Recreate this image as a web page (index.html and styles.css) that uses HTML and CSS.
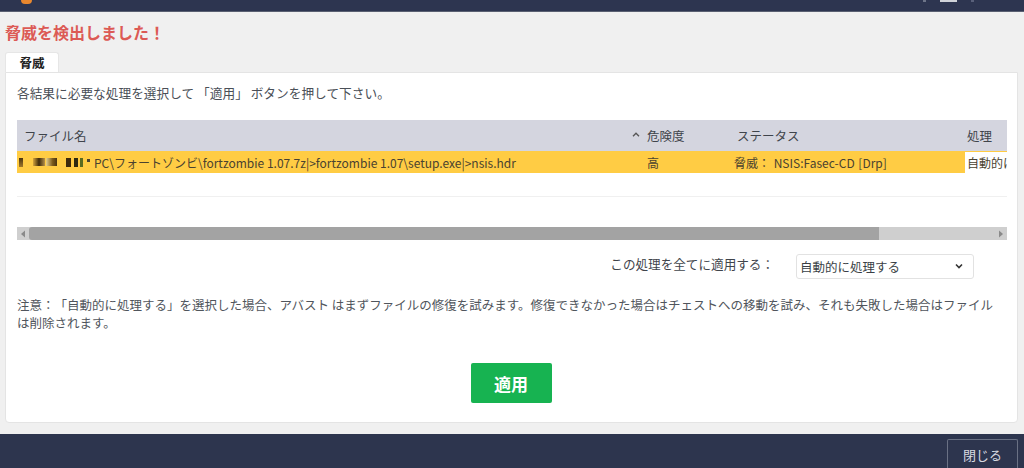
FILE: index.html
```html
<!DOCTYPE html>
<html lang="ja">
<head>
<meta charset="utf-8">
<title>脅威を検出しました</title>
<link rel="stylesheet" href="styles.css">
</head>
<body>
<header class="topbar">
  <span class="logo"></span>
  <span class="winctl">
    <span class="tick"></span>
    <span class="minbar"></span>
    <span class="tick tick-b"></span>
  </span>
</header>
<main class="content">
  <h1 class="title">脅威を検出しました！</h1>
  <div class="tabs"><div class="tab">脅威</div></div>
  <section class="panel">
    <p class="lead">各結果に必要な処理を選択して 「適用」 ボタンを押して下さい。</p>
    <div class="table">
      <div class="row head">
        <div class="c-file">ファイル名</div>
        <div class="c-risk"><svg class="sort" viewBox="0 0 8 5" width="8" height="5"><path d="M1 4.2 4 1.2 7 4.2" fill="none" stroke="#555" stroke-width="1.3"/></svg>危険度</div>
        <div class="c-status">ステータス</div>
        <div class="c-act">処理</div>
      </div>
      <div class="row item">
        <div class="c-file file-cell"><span class="mosaic"><i class="m m1"></i><i class="m m2"></i><i class="m m3"></i><i class="m m4"></i><i class="m m5"></i><i class="m m6"></i><i class="m m7"></i></span>PC\フォートゾンビ\fortzombie 1.07.7z|&gt;fortzombie 1.07\setup.exe|&gt;nsis.hdr</div>
        <div class="c-risk risk-val">高</div>
        <div class="c-status status-val">脅威： NSIS:Fasec-CD [Drp]</div>
        <div class="c-act act-val">自動的に処理する</div>
      </div>
      <div class="empty-row"></div>
    </div>
    <div class="hscroll">
      <svg class="arrow" viewBox="0 0 6 8" width="6" height="8"><path d="M5 0.5V7.5L1 4Z" fill="#8a8a8a"/></svg>
      <div class="track"><div class="thumb"></div></div>
      <svg class="arrow" viewBox="0 0 6 8" width="6" height="8"><path d="M1 0.5V7.5L5 4Z" fill="#8a8a8a"/></svg>
    </div>
    <div class="apply-all">
      <span class="apply-label">この処理を全てに適用する：</span>
      <div class="select">自動的に処理する
        <svg viewBox="0 0 8 6" width="8" height="6"><path d="M1 1.5 4 4.5 7 1.5" fill="none" stroke="#333" stroke-width="1.6"/></svg>
      </div>
    </div>
    <p class="note">注意：「自動的に処理する」を選択した場合、アバスト はまずファイルの修復を試みます。修復できなかった場合はチェストへの移動を試み、それも失敗した場合はファイルは削除されます。</p>
    <div class="actions"><button class="apply" type="button">適用</button></div>
  </section>
</main>
<footer class="footer"><button class="close" type="button">閉じる</button></footer>
</body>
</html>
```
FILE: styles.css
```css
* { box-sizing: border-box; }
html, body { margin: 0; height: 100%; }
body {
  width: 1024px; height: 468px; overflow: hidden;
  display: flex; flex-direction: column;
  background: #f0f0f0; color: #4a4f57;
  font-family: "Noto Sans CJK JP", "Noto Sans", sans-serif;
  font-size: 12px;
  text-spacing-trim: space-all;
}
.topbar {
  height: 12px; flex: none; background: #2d3550;
  border-bottom: 1px solid #5a6072;
  display: flex; justify-content: space-between; align-items: flex-start;
  padding: 0 50px 0 21px;
}
.logo { width: 11px; height: 4px; background: #e8872e; border-radius: 0 0 6px 6px; }
.winctl { display: flex; gap: 14px; }
.tick { width: 3px; height: 2px; background: #6d7488; }
.tick-b { background: #59607a; }
.minbar { width: 17px; height: 2px; background: #cfd2d8; }
.content { flex: 1; padding: 0 6px 11px 5px; display: flex; flex-direction: column; min-height: 0; }
.title { margin: 10px 0 0; height: 30px; line-height: 20px; font-size: 16px; font-weight: 700; color: #dc5a55; }
.tabs { display: flex; height: 20px; flex: none; }
.tab {
  width: 54px; background: #fff; border: 1px solid #e6e6e6; border-bottom: 0;
  border-radius: 3px 3px 0 0; text-align: center;
  font-size: 12.5px; font-weight: 700; line-height: 19px; color: #222;
}
.panel {
  flex: 1; min-height: 0; background: #fff;
  border: 1px solid #e4e4e4; border-radius: 0 0 4px 4px;
  padding: 0 10px 0 11px;
  display: flex; flex-direction: column;
}
.lead { margin: 11px 0 0; height: 36px; line-height: 18px; font-size: 12.7px; white-space: nowrap; }
.table { height: 77px; flex: none; overflow: hidden; }
.row { display: flex; align-items: center; }
.head { height: 31px; background: #d4d5df; color: #3f444b; font-size: 12.5px; }
.item { height: 22px; background: #ffcc44; color: #4a4230; font-size: 12px; }
.c-file { width: 611px; padding-left: 7px; white-space: nowrap; }
.c-risk { width: 103px; padding-left: 19px; position: relative; white-space: nowrap; }
.sort { position: absolute; left: 4px; top: 6px; }
.c-status { flex: 1; padding-left: 3px; white-space: nowrap; word-spacing: 1px; }
.head .c-status { padding-left: 6px; }
.c-act { width: 53px; overflow: hidden; white-space: nowrap; flex: none; }
.head .c-act { padding-left: 13px; }
.item .c-act { background: #fff; height: 21px; line-height: 21px; padding-left: 2px; width: 42px; }
.file-cell { display: flex; align-items: center; padding-left: 2px; }
.mosaic { display: flex; align-items: center; width: 75px; height: 10px; flex: none; }
.m { display: block; height: 9px; background: #5b4216; }
.m1 { width: 4px; margin-right: 10px; background: linear-gradient(#4a3410, #a0782a); }
.m2 { width: 12px; height: 8px; margin-right: 1px; background: linear-gradient(90deg, #d6a53c, #3d2a0c 50%, #b8924a); }
.m3 { width: 11px; height: 8px; margin-right: 9px; background: linear-gradient(90deg, #e8d08c, #7a5a1c 60%, #4a3410); }
.m4 { width: 5px; margin-right: 3px; background: #3d2a0c; }
.m5 { width: 4px; margin-right: 2px; background: #2e2a10; }
.m6 { width: 3px; margin-right: 4px; background: #5a6a20; }
.m7 { width: 3px; height: 3px; margin-top: -4px; background: #4a4230; }
.empty-row { height: 24px; border-bottom: 1px solid #f0f0f0; }
.hscroll {
  height: 13px; flex: none; margin-top: 30px; background: #cfcfcf;
  display: flex; align-items: center;
}
.arrow { flex: none; margin: 0 3px; }
.track { flex: 1; height: 13px; padding-right: 116px; }
.thumb { height: 100%; background: #a3a3a3; border-radius: 3px 0 0 3px; }
.apply-all { display: flex; justify-content: flex-end; align-items: center; gap: 22px; margin-top: 13px; padding-right: 33px; height: 26px; flex: none; }
.apply-label { color: #3f444b; font-size: 12.6px; margin-top: -5px; }
.select {
  width: 178px; height: 25px; border: 1px solid #e2e2e2; border-radius: 3px;
  background: #fff; color: #3a3f46; font-size: 12.5px;
  display: flex; justify-content: space-between; align-items: center;
  padding: 0 10px 0 3px;
}
.note { margin: 17px 0 0; padding-right: 6px; font-size: 12.5px; line-height: 18px; height: 36px; color: #50555c; }
.actions { display: flex; justify-content: center; margin-top: 31px; padding-right: 2px; }
.apply {
  width: 81px; height: 40px; border: 0; border-radius: 2px;
  background: #17b351; color: #fff;
  font-family: inherit; font-size: 17px; font-weight: 700;
}
.footer {
  height: 34px; flex: none; background: #2d354e;
  display: flex; justify-content: flex-end;
  padding: 5px 6px 0 0;
}
.close {
  width: 71px; height: 29px; background: transparent;
  border: 1px solid #6a7184; border-bottom: 0; border-radius: 2px 2px 0 0;
  color: #d8dae0; font-family: inherit; font-size: 13px;
}
```
